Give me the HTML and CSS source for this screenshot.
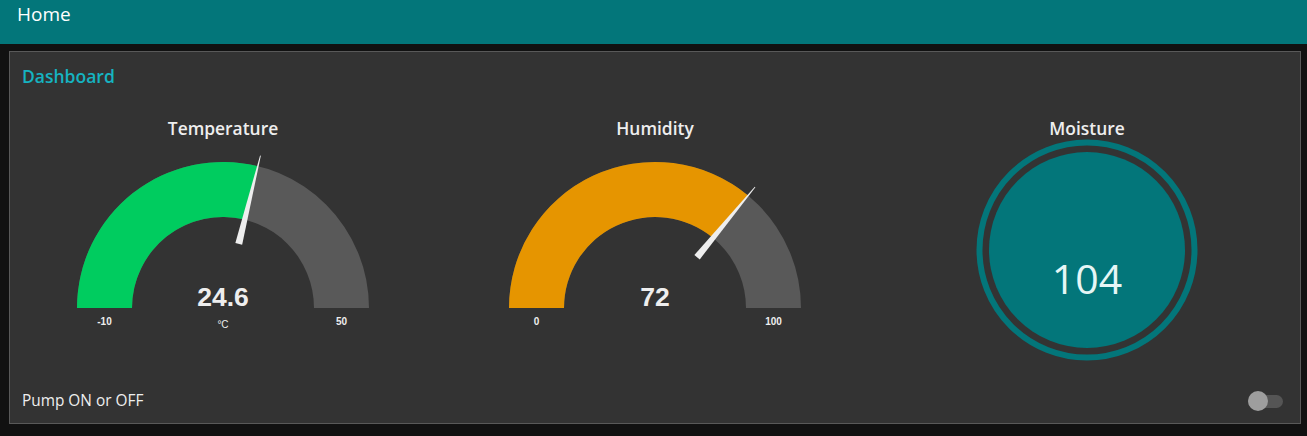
FILE: index.html
```html
<!DOCTYPE html>
<html lang="en">
<head>
<meta charset="utf-8">
<title>Home</title>
<link rel="stylesheet" href="styles.css">
</head>
<body>
<header class="toolbar"><span class="toolbar-title">Home</span></header>
<main class="content">
  <section class="card">
    <h2 class="card-title">Dashboard</h2>
    <div class="widgets">
      <div class="widget">
        <div class="widget-title">Temperature</div>
        <svg class="gauge" width="310" height="200" viewBox="0 0 310 200">
          <path class="g-track" d="M 9 169 A 146 146 0 0 1 301 169 L 246 169 A 91 91 0 0 0 64 169 Z"/>
          <path class="g-green" d="M 9 169 A 146 146 0 0 1 189.8 27.2 L 176.7 80.6 A 91 91 0 0 0 64 169 Z"/>
          <polygon class="g-needle" transform="rotate(-76.2 155 169)" points="221,165.5 221,172.5 312,169.4 312,168.6"/>
          <text class="g-value" x="155" y="167">24.6</text>
          <text class="g-lim" x="36.5" y="186">-10</text>
          <text class="g-lim" x="273.5" y="186">50</text>
          <text class="g-unit" x="155" y="189">°C</text>
        </svg>
      </div>
      <div class="widget">
        <div class="widget-title">Humidity</div>
        <svg class="gauge" width="310" height="200" viewBox="0 0 310 200">
          <path class="g-track" d="M 9 169 A 146 146 0 0 1 301 169 L 246 169 A 91 91 0 0 0 64 169 Z"/>
          <path class="g-orange" d="M 9 169 A 146 146 0 0 1 248.1 56.5 L 213.0 98.9 A 91 91 0 0 0 64 169 Z"/>
          <polygon class="g-needle" transform="rotate(-50.4 155 169)" points="221,165.5 221,172.5 312,169.4 312,168.6"/>
          <text class="g-value" x="155" y="167">72</text>
          <text class="g-lim" x="36.5" y="186">0</text>
          <text class="g-lim" x="273.5" y="186">100</text>
        </svg>
      </div>
      <div class="widget">
        <div class="widget-title">Moisture</div>
        <svg class="dial" width="222" height="222" viewBox="0 0 222 222">
          <circle class="dial-ring" cx="111" cy="111" r="107.5"/>
          <circle class="dial-fill" cx="111" cy="111" r="98"/>
          <text class="dial-value" x="111" y="155">104</text>
        </svg>
      </div>
    </div>
    <div class="switch-row">
      <span class="switch-label">Pump ON or OFF</span>
      <span class="switch"><span class="switch-thumb"></span></span>
    </div>
  </section>
</main>
</body>
</html>
```

FILE: styles.css
```css
* { box-sizing: border-box; }

body {
  margin: 0;
  background: #111111;
  font-family: "Open Sans", "Noto Sans", sans-serif;
  color: #eeeeee;
}

.toolbar {
  height: 44px;
  background: #03767a;
  padding: 1px 0 0 17px;
}

.toolbar-title {
  font-size: 19px;
  line-height: 27px;
  color: #ffffff;
}

.content {
  padding: 7px 6px 0 9px;
}

.card {
  border: 1px solid #595959;
  background: #333333;
  height: 373px;
  padding: 12px 17px 0 12px;
  display: flex;
  flex-direction: column;
}

.card-title {
  margin: 0;
  font-size: 17.5px;
  line-height: 24px;
  font-weight: 600;
  color: #16b3c1;
}

.widgets {
  margin: 29px -17px 0 -12px;
  display: grid;
  grid-template-columns: 432px 432px 432px;
  justify-content: center;
}

.widget {
  display: flex;
  flex-direction: column;
  align-items: center;
}

.widget-title {
  font-size: 17.4px;
  line-height: 22px;
  font-weight: 600;
  color: #eeeeee;
}

.gauge, .dial { display: block; }

.g-track { fill: #595959; }
.g-green { fill: #00cc5f; }
.g-orange { fill: #e69500; }
.g-needle { fill: #eeeeee; }

.g-value {
  font-family: "Liberation Sans", Arial, sans-serif;
  font-weight: 700;
  font-size: 26.5px;
  fill: #eeeeee;
  text-anchor: middle;
}

.g-lim {
  font-family: "Liberation Sans", Arial, sans-serif;
  font-weight: 700;
  font-size: 10px;
  fill: #eeeeee;
  text-anchor: middle;
}

.g-unit {
  font-family: "Liberation Sans", Arial, sans-serif;
  font-size: 10px;
  fill: #eeeeee;
  text-anchor: middle;
}

.dial-ring { fill: none; stroke: #03767a; stroke-width: 6; }
.dial-fill { fill: #03767a; }

.dial-value {
  font-family: "Open Sans", sans-serif;
  font-size: 41px;
  fill: #e6f6f6;
  text-anchor: middle;
}

.switch-row {
  margin-top: auto;
  margin-bottom: 11px;
  display: flex;
  align-items: center;
  justify-content: space-between;
}

.switch-label {
  font-size: 15.4px;
  line-height: 22px;
  color: #eeeeee;
}

.switch {
  position: relative;
  width: 35px;
  height: 13px;
  border-radius: 7px;
  background: #555555;
}

.switch-thumb {
  position: absolute;
  left: 0;
  top: -4px;
  width: 20px;
  height: 20px;
  border-radius: 50%;
  background: #9e9e9e;
}
```
